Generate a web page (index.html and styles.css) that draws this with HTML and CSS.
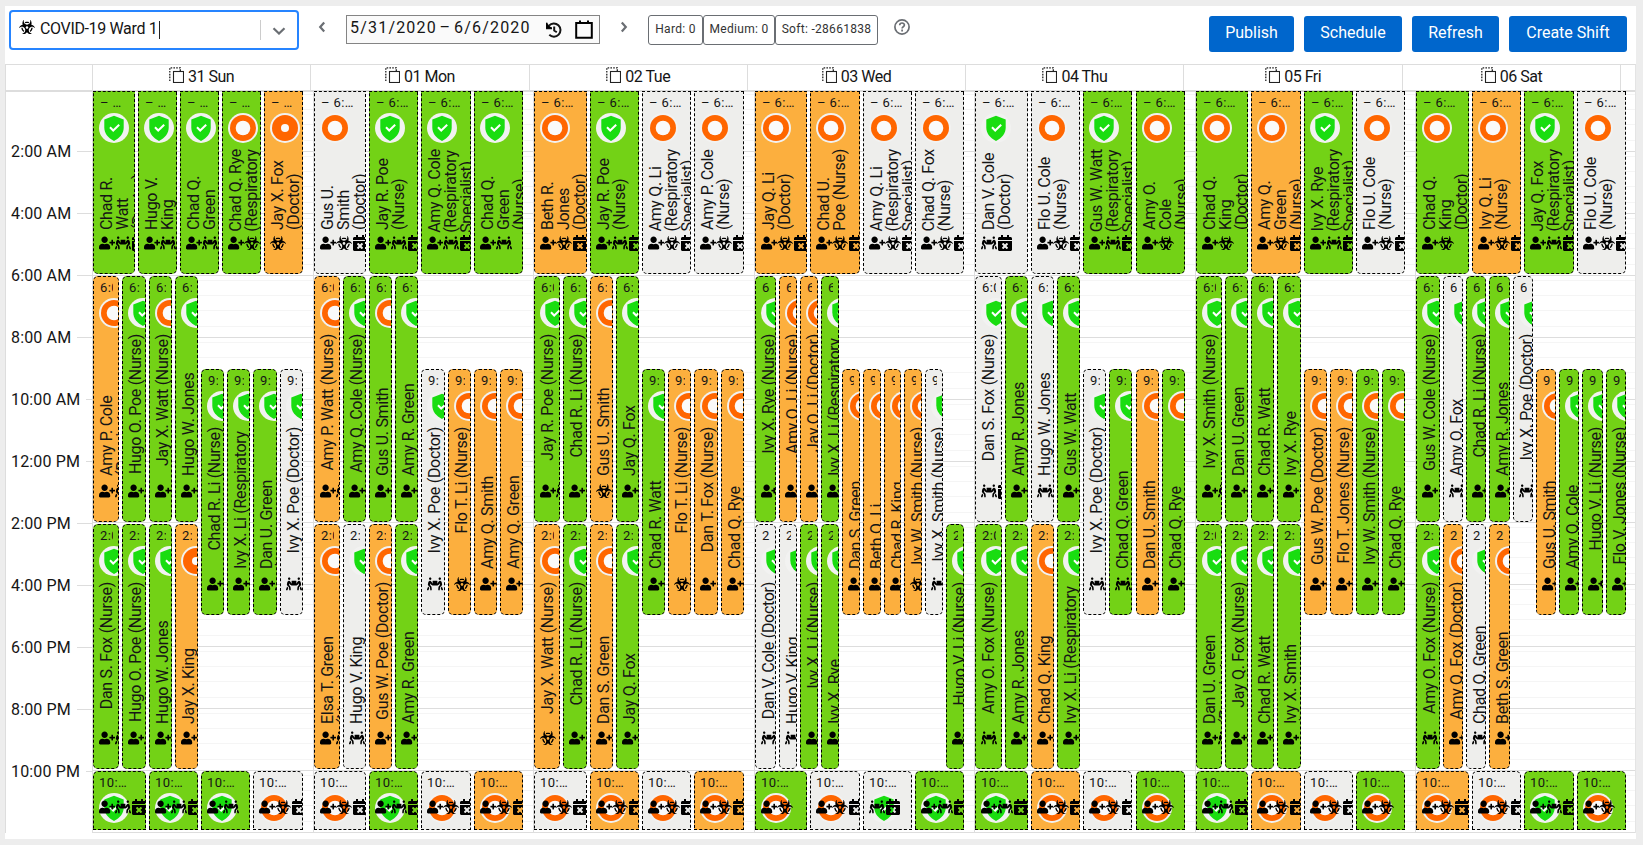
FILE: index.html
```html
<!DOCTYPE html>
<html lang="en">
<head>
<meta charset="utf-8">
<title>Shift Roster</title>
<link rel="stylesheet" href="styles.css">
</head>
<body>
<svg class="defs" width="0" height="0">
  <symbol id="i-p" viewBox="0 0 640 512"><path d="M624 208h-64v-64c0-8.8-7.2-16-16-16h-32c-8.8 0-16 7.2-16 16v64h-64c-8.8 0-16 7.2-16 16v32c0 8.8 7.2 16 16 16h64v64c0 8.8 7.2 16 16 16h32c8.8 0 16-7.2 16-16v-64h64c8.8 0 16-7.2 16-16v-32c0-8.8-7.2-16-16-16zm-400 48c70.7 0 128-57.3 128-128S294.7 0 224 0 96 57.3 96 128s57.3 128 128 128zm89.6 32h-16.7c-22.2 10.2-46.9 16-72.9 16s-50.6-5.8-72.9-16h-16.7C60.2 288 0 348.2 0 422.4V464c0 26.5 21.5 48 48 48h352c26.5 0 48-21.5 48-48v-41.6c0-74.2-60.2-134.4-134.4-134.4z"/></symbol>
  <symbol id="i-c" viewBox="0 0 640 512"><path d="M128 96c26.500 0 48-21.500 48-48S154.500 0 128 0 80 21.500 80 48s21.500 48 48 48zm384 0c26.500 0 48-21.500 48-48S538.500 0 512 0s-48 21.500-48 48 21.500 48 48 48zm125.700 372.100l-44-110-41.100 46.400-2 18.200 27.700 69.200c5 12.500 17 20.100 29.700 20.100 4 0 8-.7 11.900-2.300 16.400-6.600 24.400-25.200 17.800-41.600zm-34.200-209.800L585 178.100c-4.600-20-18.600-36.800-37.500-44.900-18.500-8-39-6.700-56.100 3.300-22.700 13.400-39.600 34.500-48.100 59.400L432 229.800 416 240v-96c0-8.800-7.200-16-16-16H240c-8.800 0-16 7.200-16 16v96l-16.100-10.200-11.300-33.900c-8.300-25-25.400-46-48.100-59.400-17.200-10-37.600-11.300-56.100-3.300-18.900 8.100-32.900 24.900-37.500 44.900l-18.400 80.200c-4.600 20 .7 41.200 14.400 56.700l67.200 75.900 10.100 92.600C130 499.800 143.800 512 160 512c1.200 0 2.300-.1 3.500-.2 17.600-1.900 30.200-17.700 28.300-35.300l-10.100-92.800c-1.500-13-6.900-25.100-15.600-35l-43.300-49 17.600-70.300 6.800 20.400c4.100 12.500 11.900 23.400 24.500 32.600l51.100 32.500c4.600 2.900 12.100 4.600 17.200 5h160c5.100-.4 12.600-2.100 17.200-5l51.100-32.500c12.600-9.200 20.400-20 24.500-32.600l6.800-20.400 17.600 70.300-43.300 49c-8.700 9.900-14.100 22-15.600 35l-10.100 92.800c-1.900 17.600 10.800 33.400 28.300 35.300 1.200.1 2.300.2 3.500.2 16.100 0 30-12.100 31.800-28.500l10.100-92.600 67.200-75.900c13.600-15.500 19-36.700 14.400-56.700zM46.300 358.100l-44 110c-6.600 16.400 1.400 35 17.800 41.600 16.800 6.600 35.100-1.700 41.600-17.800l27.700-69.200-2-18.200-41.100-46.400z"/></symbol>
  <symbol id="i-b" viewBox="0 0 576 512"><path d="M287.9 112c18.6 0 36.2 3.8 52.8 9.6 13.3-10.3 23.6-24.3 29.5-40.7-25.2-10.9-53-17-82.2-17-29.1 0-56.9 6-82.1 16.9 5.9 16.4 16.2 30.4 29.5 40.7 16.5-5.7 34-9.5 52.5-9.5zM163.6 438.7c12-11.8 20.4-26.4 24.5-42.4-32.9-26.4-54.8-65.3-58.9-109.6-8.5-2.8-17.2-4.6-26.4-4.6-7.6 0-15.2 1-22.5 3.1 4.1 62.8 35.8 118 83.3 153.5zm224.2-42.6c4.1 16 12.5 30.7 24.5 42.5 47.4-35.5 79.1-90.7 83-153.5-7.2-2-14.7-3-22.2-3-9.2 0-18 1.9-26.6 4.7-4.1 44.2-26 82.9-58.7 109.3zm113.5-205c-17.6-10.4-36.3-16.6-55.3-19.9 6-17.7 10-36.4 10-56.2 0-41-14.5-80.8-41-112.2-2.5-3-6.6-3.7-10-1.8-3.3 1.9-4.8 6-3.6 9.7 4.5 13.8 6.6 26.3 6.6 38.5 0 67.8-53.8 122.9-120 122.9S168 117 168 49.2c0-12.1 2.2-24.7 6.6-38.5 1.2-3.7-.3-7.8-3.6-9.7-3.4-1.9-7.5-1.2-10 1.8C134.6 34.2 120 74 120 115c0 19.8 3.9 38.5 10 56.2-18.9 3.3-37.7 9.5-55.3 19.9-34.6 20.5-61 53.3-74.3 92.4-1.3 3.7.2 7.7 3.5 9.8 3.3 2 7.5 1.3 10-1.6 9.4-10.8 19-19.1 29.2-25.1 57.3-33.9 130.8-13.7 163.9 45 33.1 58.7 13.4 134-43.9 167.9-10.2 6.1-22 10.4-35.8 13.4-3.7.8-6.4 4.2-6.4 8.1.1 4 2.7 7.3 6.5 8 39.7 7.8 80.6.8 115.2-19.7 18-10.6 32.9-24.5 45.3-40.1 12.4 15.6 27.3 29.5 45.3 40.1 34.6 20.5 75.5 27.5 115.2 19.7 3.8-.7 6.4-4 6.5-8 0-3.9-2.6-7.3-6.4-8.1-13.9-2.9-25.6-7.3-35.8-13.4-57.3-33.9-77-109.2-43.9-167.9s106.6-78.9 163.9-45c10.2 6.1 19.8 14.3 29.2 25.1 2.5 2.9 6.7 3.6 10 1.6s4.8-6.1 3.5-9.8c-13.1-39.1-39.5-71.9-74.1-92.4zm-213.4 129c-26.5 0-48-21.5-48-48s21.5-48 48-48 48 21.5 48 48-21.5 48-48 48z"/></symbol>
  <symbol id="i-k" viewBox="0 0 448 512"><path d="M436 160H12c-6.6 0-12-5.4-12-12v-36c0-26.5 21.5-48 48-48h48V12c0-6.6 5.4-12 12-12h40c6.6 0 12 5.4 12 12v52h128V12c0-6.6 5.4-12 12-12h40c6.6 0 12 5.4 12 12v52h48c26.5 0 48 21.5 48 48v36c0 6.6-5.4 12-12 12zM12 192h424c6.6 0 12 5.4 12 12v260c0 26.5-21.5 48-48 48H48c-26.5 0-48-21.5-48-48V204c0-6.6 5.4-12 12-12zm257.3 160l48.1-48.1c4.7-4.7 4.7-12.3 0-17l-28.3-28.3c-4.7-4.7-12.3-4.7-17 0L224 306.7l-48.1-48.1c-4.7-4.7-12.3-4.7-17 0l-28.3 28.3c-4.7 4.7-4.7 12.3 0 17l48.1 48.1-48.1 48.1c-4.7 4.7-4.7 12.3 0 17l28.3 28.3c4.7 4.7 12.3 4.7 17 0l48.1-48.1 48.1 48.1c4.7 4.7 12.3 4.7 17 0l28.3-28.3c4.7-4.7 4.7-12.3 0-17L269.3 352z"/></symbol>
  <symbol id="i-shield" viewBox="0 0 30 30"><circle cx="15" cy="15" r="15" fill="#f2f2f1"/><path fill="#19dd10" d="M15 2.8l9.7 3.7v8c0 6-4 10.700-9.700 13.400C9.300 25.200 5.300 20.500 5.300 14.500v-8z"/><path fill="none" stroke="#fff" stroke-width="2" d="M11 14.200l3.200 3.300 6-5.800"/></symbol>
  <symbol id="i-ring" viewBox="0 0 30 30"><circle cx="15" cy="15" r="15" fill="#f2f2f1"/><circle cx="15" cy="15" r="13" fill="#ff6600"/><circle cx="15" cy="15" r="7.300" fill="#fafafa"/></symbol>
  <symbol id="i-dot" viewBox="0 0 30 30"><circle cx="15" cy="15" r="15" fill="#f2f2f1"/><circle cx="15" cy="15" r="13" fill="#ff6600"/><circle cx="15" cy="15" r="4" fill="#fafafa"/></symbol>
  <symbol id="i-copy" viewBox="0 0 15 16"><rect x="4.500" y="4.500" width="10" height="11" fill="none" stroke="#222" stroke-width="1.100"/><path d="M.8 14V.8h10.500V4" fill="none" stroke="#222" stroke-width="1.300" stroke-dasharray="1.600 1.200"/></symbol>
</svg>
<main class="page">
  <header class="toolbar">
    <div class="select">
      <svg class="select-icon"><use href="#i-b"/></svg>
      <span class="select-text">COVID-19 Ward 1</span><span class="caret"></span>
      <span class="divider"></span>
      <svg class="chev-down" viewBox="0 0 14 8"><path d="M1.500 1.200L7 6.500l5.500-5.300"/></svg>
    </div>
    <svg class="chev prev" viewBox="0 0 8 12"><path d="M6.200 1.500L2.200 6l4 4.500"/></svg>
    <div class="range">
      <span class="range-text">5/31/2020 – 6/6/2020</span>
      <svg class="history" viewBox="0 0 16 16"><path d="M3 3.600A6.600 6.600 0 1 1 3.300 12.800M.6.800v5.400H6M8.200 4.500v4l2.600 1.800" fill="none" stroke="#151515" stroke-width="2"/><path d="M.2.600v5.900h5.900z"/></svg>
      <svg class="calendar" viewBox="0 0 18 19"><path d="M1.200 3h15.600v14.800H1.200z" fill="none" stroke="#000" stroke-width="2"/><path d="M4 .5h2V3H4zM12 .5h2V3h-2z"/></svg>
    </div>
    <svg class="chev next" viewBox="0 0 8 12"><path d="M1.800 1.500l4 4.500-4 4.500"/></svg>
    <div class="scores"><span class="score s1">Hard: 0</span><span class="score s2">Medium: 0</span><span class="score s3">Soft: -28661838</span></div>
    <svg class="help" viewBox="0 0 16 16"><circle cx="8" cy="8" r="7.100"/><path d="M5.700 6.200c.1-3 4.800-2.800 4.700-.1 0 1.700-2.300 1.600-2.300 3.400M8.100 10.600v1.800"/></svg>
    <div class="actions">
      <button class="btn b1">Publish</button><button class="btn b2">Schedule</button><button class="btn b3">Refresh</button><button class="btn b4">Create Shift</button>
    </div>
  </header>
  <section class="cal">
    <div class="head" id="head"><div class="head-gutter"></div></div>
    <div class="body" id="body"><div class="gutter" id="gutter"></div></div>
  </section>
</main>
<script src="app.js"></script>
</body>
</html>
```
FILE: styles.css
```css
* { box-sizing: border-box; }
body { margin: 0; background: #ededed; font-family: Roboto, "Noto Sans", sans-serif; font-size: 16px; color: #151515; overflow: hidden; }
.defs { display: block; position: absolute; }
.page { margin: 6px 7px 0 5px; height: 833px; background: #fff; overflow: hidden; }
.toolbar { display: flex; align-items: flex-start; height: 58px; padding: 4px 9px 0 4px; }
.select { display: flex; align-items: center; width: 290px; height: 40px; border: 2px solid #2684ff; border-radius: 4px; padding-left: 8px; }
.select-icon { width: 16px; height: 14px; margin-top: -6px; }
.select-text { margin-left: 5px; margin-top: -3px; letter-spacing: -.35px; white-space: nowrap; }
.caret { width: 1px; height: 18px; background: #222; margin-left: 2px; margin-top: -1px; }
.divider { width: 1px; height: 20px; background: #ccc; margin-left: auto; }
.chev-down { width: 14px; height: 8px; margin: 2px 11px 0 11px; }
.chev-down path, .chev path { fill: none; stroke: #6a6e73; stroke-width: 2.200; }
.chev { width: 8px; height: 12px; margin-top: 11px; }
.prev { margin-left: 19px; }
.next { margin-left: 20px; }
.range { display: flex; align-items: center; width: 254px; height: 29px; margin-left: 20px; margin-top: 5px; border: 1px solid #848484; background: #fafafa; padding-left: 3px; }
.range-text { width: 181px; letter-spacing: 1.200px; word-spacing: -2.500px; white-space: nowrap; margin-top: -4px; }
.history { width: 16px; height: 16px; margin-left: 15px; }
.calendar { width: 18px; height: 19px; margin-left: 13px; }
.scores { display: flex; margin-left: 20px; margin-top: 5px; }
.score { height: 30px; border: 1px solid #6a6e73; border-radius: 3px; font-size: 12px; line-height: 27px; text-align: center; white-space: nowrap; color: #333; letter-spacing: .3px; }
.s1 { width: 55px; }
.s2 { width: 72px; }
.s3 { width: 103px; }
.help { width: 16px; height: 16px; margin-left: 16px; margin-top: 9px; fill: none; stroke: #6a6e73; stroke-width: 1.700; }
.actions { display: flex; gap: 10px; margin-left: auto; margin-top: 6px; }
.btn { height: 36px; border: 0; border-radius: 3px; background: #06c; color: #fff; font: 16px Roboto, sans-serif; padding: 0 0 3px; }
.b1 { width: 85px; }
.b2 { width: 98px; }
.b3 { width: 87px; }
.b4 { width: 118px; }
.cal { height: 769px; border: 1px solid #ddd; border-bottom: 0; border-right-color: #e4e4e4; }
.head { display: grid; grid-template-columns: 86px repeat(7, 218.300px) 1fr; height: 27px; border-bottom: 2px solid #ddd; }
.head > div { border-left: 1px solid #ddd; }
.head > .head-gutter { border-left: 0; }
.day-head { display: flex; justify-content: center; align-items: center; gap: 4px; white-space: nowrap; padding-bottom: 2px; letter-spacing: -.5px; }
.day-head svg { width: 15px; height: 16px; margin-top: -3px; }
.body { display: grid; grid-template-columns: 86px 221px 220px 221px 220px 221px 220px 1fr; grid-template-rows: 743px; margin-top: -2px; }
.gutter { display: grid; grid-template-rows: repeat(12, minmax(0, 1fr)); }
.hour { display: flex; align-items: center; height: 20px; align-self: end; margin-bottom: -10px; padding-left: 5px; letter-spacing: .15px; white-space: nowrap; }
.hour::after { content: ""; flex: 1; height: 1px; background: #ddd; margin-left: 6px; }
.day { display: grid; grid-template-columns: minmax(0, 1fr); grid-template-rows: repeat(24, minmax(0, 1fr)); border-left: 1px solid #ddd; min-width: 0; min-height: 0; }
.slot { grid-column: 1; border-bottom: 1px solid #ddd; background: linear-gradient(#f5f5f5, #f5f5f5) 0 4px / 100% 1px no-repeat, linear-gradient(#f5f5f5, #f5f5f5) 0 19px / 100% 1px no-repeat, linear-gradient(#f5f5f5, #f5f5f5) 0 34px / 100% 1px no-repeat, linear-gradient(#f5f5f5, #f5f5f5) 0 50px / 100% 1px no-repeat; }
.event { grid-column: 1; min-height: 0; display: grid; grid-template-columns: minmax(0, 1fr); grid-template-rows: 22px 35px minmax(0, 1fr); margin-top: .2px; margin-bottom: 1.700px; border: 1px dashed #000; border-radius: 5px; padding-left: 5px; overflow: hidden; color: #151515; }
.first { border-radius: 0 0 5px 5px; margin-top: 1px; }
.late { border-radius: 5px 5px 0 0; margin-bottom: 3px; }
.green { background: #73d216; }
.orange { background: #fcaf3e; }
.gray { background: #eeeeec; }
.time { grid-row: 1; grid-column: 1; height: 18px; padding-left: 1px; margin-top: 2px; margin-right: 5px; font-size: 13px; line-height: 18px; letter-spacing: .4px; overflow: hidden; white-space: nowrap; }
.late .time { padding-left: 0; }
.badge { grid-row: 2; grid-column: 1; width: 30px; height: 30px; margin-top: -1px; }
.name { grid-row: 3; grid-column: 1; justify-self: start; align-self: start; writing-mode: vertical-rl; transform: rotate(180deg); max-height: 142px; min-height: min-content; height: fit-content; line-height: 16px; letter-spacing: -.3px; }
.first .name { max-height: 81px; }
.late .name { max-height: 10px; }
.icons { grid-row: 1 / 4; grid-column: 1; align-self: end; margin-bottom: 22px; display: flex; height: 16px; }
.icons svg { flex: none; width: 16px; height: 16px; }
.late .icons { margin-bottom: 14px; }
```
FILE: app.js
```js
const SVG = id => `<svg><use href="#i-${id}"/></svg>`;
const R = { D: 'Doctor', N: 'Nurse', R: 'Respiratory Specialist' };
const C = { g: 'green', o: 'orange', w: 'gray' };
const B = { s: 'shield', r: 'ring', d: 'dot' };

// shift kind: first grid row, row span, time label, class
const K = {
  A: [1, 6, '– 6:…', 'first'],
  B: [7, 8, '6:00', ''],
  M: [10, 8, '9:00', ''],
  P: [15, 8, '2:00', ''],
  L: [23, 2, '10:…', 'late']
};

// each line: kind, left, width, colour + badge, icons, employee, role
// in names, _ is a space and ~ a non-breaking one
const days = [
`A 1 42 gs pck Chad_R._Watt D
A 46 39 gs pc Hugo_V._King N
A 88 39 gs pc Chad_Q._Green N
A 130 39 gr pb Chad~Q.~Rye R
A 172 39 od b Jay_X._Fox D
B 1 26 or pc Amy_P._Cole R
B 30 24 gs pc Hugo_O._Poe N
B 57 23 gr pc Jay_X._Watt N
B 83 23 gs pc Hugo_W._Jones N
M 109 23 gs pc Chad_R._Li N
M 135 23 gs pc Ivy_X._Li R
M 161 24 gs pc Dan_U._Green R
M 188 23 ws ck Ivy_X._Poe D
P 1 26 gs pc Dan_S._Fox N
P 30 24 gs pc Hugo_O._Poe N
P 57 23 gs pc Hugo_W._Jones N
P 83 23 od pc Jay_X._King R
L 1 53 gs pck Amy_Q._Cole R
L 57 49 gs pck Jay_R._Poe N
L 109 49 gs pc Chad_Q._Green N
L 161 50 wr pbk Gus_U._Smith D`,
`A 1 52 wr pbk Gus_U._Smith D
A 56 49 gs pck Jay_R._Poe N
A 108 50 gs pck Amy~Q.~Cole R
A 161 49 gs pc Chad_Q._Green N
B 1 26 or pc Amy_P._Watt N
B 30 23 gs p Amy_Q._Cole N
B 56 23 gr p Gus_U._Smith R
B 82 23 gs p Amy_R._Green R
M 108 24 ws c Ivy_X._Poe D
M 135 23 or b Flo_T._Li N
M 161 23 or p Amy_Q._Smith R
M 187 23 or p Amy_Q._Green R
P 1 26 or pc Elsa_T._Green N
P 30 23 ws c Hugo_V._King R
P 56 23 or p Gus_W._Poe D
P 82 23 gs p Amy_R._Green R
L 1 52 wr pbk Amy_Q._Li R
L 56 49 gs pck Jay_R._Poe N
L 108 50 wr pbk Amy_P._Cole N
L 161 49 or pbk Beth_R._Jones D`,
`A 1 53 or pbk Beth_R._Jones D
A 57 49 gs pck Jay_R._Poe N
A 109 49 wr pbk Amy_Q._Li R
A 161 50 wr pbk Amy_P.~Cole N
B 1 26 gs pc Jay_R._Poe N
B 30 24 gs p Chad_R._Li N
B 57 23 or b Gus_U._Smith R
B 83 23 gs p Jay_Q._Fox R
M 109 23 gs p Chad_R._Watt R
M 135 23 or b Flo_T._Li N
M 161 24 or p Dan_T._Fox N
M 188 23 or p Chad_Q._Rye R
P 1 26 or b Jay_X._Watt N
P 30 24 gs p Chad_R._Li N
P 57 23 or p Dan_S._Green R
P 83 23 gs p Jay_Q._Fox R
L 1 53 wr pbk Chad_Q._Fox N
L 57 49 or pbk Jay_Q._Li D
L 109 49 wr pbk Amy_Q._Li R
L 161 50 or pbk Chad_U._Poe N`,
`A 1 52 or pbk Jay_Q._Li D
A 56 50 or pbk Chad_U._Poe~ N
A 109 49 wr pbk Amy_Q._Li R
A 161 49 wr pbk Chad~Q.~Fox N
B 1 21 gs p Ivy_X._Rye N
B 25 18 or p Amy_Q._Li N
B 46 18 or p Jay_Q._Li D
B 67 18 gs p Ivy_X._Li R
M 88 18 or p Dan_S._Green R
M 109 18 or p Beth_Q._Li R
M 130 17 or p Chad_R._King R
M 150 18 or b Ivy_W._Smith N
M 171 18 ws c Ivy_X._Smith N
P 1 21 ws c Dan_V._Cole D
P 25 18 ws c Hugo_V._King R
P 46 18 gs p Ivy_X._Li N
P 67 18 gs p Ivy_X._Rye R
P 192 18 gs p Hugo_V._Li N
L 1 52 gr pb Amy_O._Cole N
L 56 50 wr pbk Flo_U._Cole N
L 109 49 ws ck Dan_V._Cole D
L 161 49 gs pck Gus_W._Watt R`,
`A 1 53 ws ck Dan_V._Cole D
A 57 49 wr pbk Flo_U._Cole N
A 109 49 gs pck Gus~W.~Watt R
A 162 49 gr pb Amy_O._Cole N
B 1 27 ws ck Dan_S._Fox N
B 31 23 gs p Amy_R._Jones R
B 57 23 ws c Hugo_W._Jones R
B 83 23 gs p Gus_W._Watt R
M 109 23 ws c Ivy_X._Poe D
M 135 23 gs c Chad_Q._Green R
M 162 23 or p Dan_U._Smith R
M 188 23 gr p Chad_Q._Rye R
P 1 27 gs c Amy_O._Fox N
P 31 23 gs p Amy_R._Jones R
P 57 23 or p Chad_Q._King R
P 83 23 gs p Ivy_X._Li R
L 1 53 gs pck Ivy_X._Rye R
L 57 49 or pbk Amy_Q._Green N
L 109 49 wr pbk Flo_U._Cole N
L 162 49 gr pb Chad_Q._King D`,
`A 1 52 gr pb Chad_Q._King D
A 56 50 or pbk Amy_Q._Green N
A 109 49 gs pck Ivy_X._Rye R
A 161 49 wr pbk Flo_U._Cole N
B 1 26 gs pc Ivy_X._Smith N
B 30 23 gs p Dan_U._Green R
B 56 23 gs p Chad_R._Watt R
B 82 24 gs p Ivy_X._Rye R
M 109 23 or p Gus_W._Poe D
M 135 23 or p Flo_T._Jones N
M 161 23 gr p Ivy_W._Smith N
M 187 23 gr p Chad_Q._Rye R
P 1 26 gs pc Dan_U._Green R
P 30 23 gs p Jay_Q._Fox N
P 56 23 gs p Chad_R._Watt R
P 82 24 gs p Ivy_X._Smith R
L 1 52 gs pck Jay_Q._Fox R
L 56 50 or pbk Ivy_Q._Li N
L 109 49 wr pbk Flo_U._Cole N
L 161 49 gr pb Chad_Q._King D`,
`A 1 53 gr pb Chad_Q._King D
A 57 49 or pbk Ivy_Q._Li N
A 109 50 gs pck Jay_Q._Fox R
A 162 49 wr pbk Flo_U._Cole N
B 1 24 gs p Gus_W._Cole N
B 28 20 ws c Amy_O._Fox R
B 51 20 gs p Chad_R._Li N
B 74 21 gs p Amy_R._Jones R
B 98 20 ws c Ivy_X._Poe D
M 121 20 or p Gus_U._Smith R
M 144 20 gs p Amy_Q._Cole R
M 167 21 gs p Hugo_V._Li N
M 191 20 gs p Flo_V._Jones N
P 1 24 gs c Amy_O._Fox N
P 28 20 or p Amy_Q._Fox D
P 51 20 ws c Chad_Q._Green R
P 74 21 or p Beth_S._Green R
L 1 53 or pbk Ivy_Q._Li N
L 57 49 wr pbk Flo_U._Cole N
L 109 50 gs pck Jay_Q._Fox R
L 162 49 gr pb Chad_Q._King D`
];

const head = document.getElementById('head');
['31 Sun', '01 Mon', '02 Tue', '03 Wed', '04 Thu', '05 Fri', '06 Sat'].forEach(t => {
  head.insertAdjacentHTML('beforeend', `<div class="day-head">${SVG('copy')}<span>${t}</span></div>`);
});
head.insertAdjacentHTML('beforeend', '<div></div>');

const gutter = document.getElementById('gutter');
for (let h = 2; h <= 24; h += 2) {
  const label = `${h > 12 ? h - 12 : h}:00 ${h < 12 ? 'AM' : 'PM'}`;
  gutter.insertAdjacentHTML('beforeend', h < 24 ? `<div class="hour">${label}</div>` : '<div></div>');
}

const body = document.getElementById('body');
days.forEach(list => {
  let html = '';
  for (let i = 0; i < 12; i++) html += `<div class="slot" style="grid-row:${i * 2 + 1} / span 2"></div>`;
  list.split('\n').forEach(line => {
    const [k, x, w, cb, icons, name, role] = line.split(' ');
    const [row, span, label, cls] = K[k];
    const time = k === 'A' && w < 45 ? '– …' : label;
    const full = `${name} (${R[role]})`.replace('~ (', '~(').replace(/_/g, ' ').replace(/~/g, '\u00a0');
    html += `<div class="event ${cls} ${C[cb[0]]}" style="grid-row:${row} / span ${span};margin-left:${x - 1}px;width:${w}px">` +
      `<div class="time">${time}</div><svg class="badge"><use href="#i-${B[cb[1]]}"/></svg>` +
      `<div class="name">${full}</div>` +
      `<div class="icons">${[...icons].map(SVG).join('')}</div></div>`;
  });
  body.insertAdjacentHTML('beforeend', `<div class="day">${html}</div>`);
});
```
